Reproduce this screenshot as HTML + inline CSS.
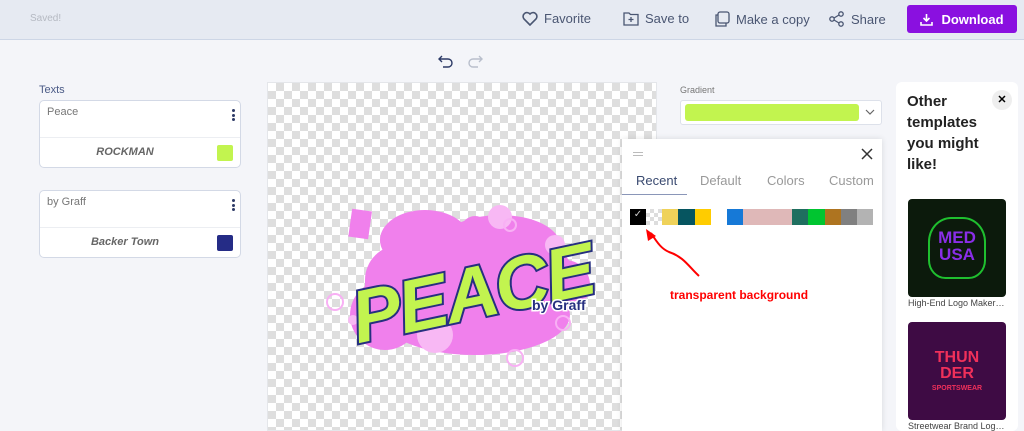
<!DOCTYPE html>
<html><head><meta charset="utf-8"><style>
*{box-sizing:border-box;margin:0;padding:0}
body{width:1024px;height:431px;overflow:hidden;background:#f4f5f9;font-family:"Liberation Sans",sans-serif;position:relative}
.top{position:absolute;left:0;top:0;width:1024px;height:40px;background:#e6eaf2;border-bottom:1px solid #cdd6e6}
.top .saved{position:absolute;left:30px;top:13px;font-size:10px;color:#b5b9c2}
.act{position:absolute;top:11px;font-size:13px;color:#4a5672;display:flex;align-items:center;gap:6px}
.dl{position:absolute;left:907px;top:5px;width:110px;height:28px;background:#8a10e0;border-radius:3px;color:#fff;font-weight:bold;font-size:13px;display:flex;align-items:center;justify-content:center;gap:8px}
.lbl{position:absolute;font-size:11px;color:#4a5a86}
.card{position:absolute;left:39px;width:202px;height:68px;background:#fff;border:1px solid #d3d9e6;border-radius:5px}
.card .t{position:absolute;left:7px;top:5px;font-size:11px;color:#777}
.card .hr{position:absolute;left:0;right:0;top:36px;border-top:1px solid #eceef2}
.card .f{position:absolute;left:0;width:170px;text-align:center;top:45px;font-size:11px;color:#666;font-style:italic;font-weight:bold}
.card .sw{position:absolute;left:177px;top:44px;width:16px;height:16px;border-radius:2px}
.dots{position:absolute;left:192px;top:8px;width:3px}
.dots i{display:block;width:3px;height:3px;background:#2c3a66;border-radius:50%;margin-bottom:1.5px}
.canvas{position:absolute;left:267px;top:82px;width:390px;height:349px;background-color:#fff;background-image:linear-gradient(45deg,#dedede 25%,transparent 25%,transparent 75%,#dedede 75%),linear-gradient(45deg,#dedede 25%,transparent 25%,transparent 75%,#dedede 75%);background-size:16px 16px;background-position:0 0,8px 8px;border:1px solid #e4e6ea}
.pop{position:absolute;left:622px;top:139px;width:260px;height:292px;background:#fff;box-shadow:0 0 6px rgba(0,0,0,.12)}
.tab{position:absolute;top:34px;font-size:13px;color:#999}
.right{position:absolute;left:896px;top:82px;width:122px;height:349px;background:#fff;border-radius:6px}
</style></head><body>
<div class="top">
<div class="saved">Saved!</div>
<div class="act" style="left:522px"><svg width="16" height="15" viewBox="0 0 16 15"><path d="M8 14L2 8A3.5 3.5 0 0 1 8 3A3.5 3.5 0 0 1 14 8Z" fill="none" stroke="#4a5672" stroke-width="1.6"/></svg>Favorite</div>
<div class="act" style="left:623px"><svg width="16" height="15" viewBox="0 0 16 15"><path d="M1 2H6L7.5 3.5H15V14H1Z" fill="none" stroke="#4a5672" stroke-width="1.3"/><path d="M8 6V11M5.5 8.5H10.5" stroke="#4a5672" stroke-width="1.3"/></svg>Save to</div>
<div class="act" style="left:714px"><svg width="16" height="16" viewBox="0 0 16 16"><rect x="4" y="1" width="11" height="11" rx="2" fill="none" stroke="#4a5672" stroke-width="1.3"/><path d="M4 4H2V15H12V12" fill="none" stroke="#4a5672" stroke-width="1.3"/></svg>Make a copy</div>
<div class="act" style="left:828px"><svg width="17" height="16" viewBox="0 0 17 16"><circle cx="13" cy="3" r="2.2" fill="none" stroke="#4a5672" stroke-width="1.3"/><circle cx="13" cy="13" r="2.2" fill="none" stroke="#4a5672" stroke-width="1.3"/><circle cx="4" cy="8" r="2.2" fill="none" stroke="#4a5672" stroke-width="1.3"/><path d="M6 7L11 4M6 9L11 12" stroke="#4a5672" stroke-width="1.3"/></svg>Share</div>
<div class="dl"><svg width="13" height="13" viewBox="0 0 13 13"><path d="M6.5 1V8M3.5 5L6.5 8L9.5 5M1 9V12H12V9" fill="none" stroke="#fff" stroke-width="1.6"/></svg>Download</div>
</div>
<svg style="position:absolute;left:438px;top:53px" width="46" height="16" viewBox="0 0 46 16"><path d="M4 3L1 6L4 9M1 6H10A4 4 0 0 1 10 14H5" fill="none" stroke="#2c3a66" stroke-width="1.4"/><path d="M41 3L44 6L41 9M44 6H35A4 4 0 0 0 35 14H40" fill="none" stroke="#b9bfcc" stroke-width="1.4"/></svg>
<div class="lbl" style="left:39px;top:84px">Texts</div>
<div class="card" style="top:100px"><div class="t">Peace</div><div class="dots"><i></i><i></i><i></i></div><div class="hr"></div><div class="f">ROCKMAN</div><div class="sw" style="background:#c2f44f"></div></div>
<div class="card" style="top:190px"><div class="t">by Graff</div><div class="dots"><i></i><i></i><i></i></div><div class="hr"></div><div class="f">Backer Town</div><div class="sw" style="background:#252c86"></div></div>
<div class="canvas"></div>
<svg style="position:absolute;left:325px;top:195px" width="290" height="190" viewBox="0 0 290 190">
<g fill="#f080ec"><rect x="25" y="15" width="20" height="28" transform="rotate(8 35 30)"/><ellipse cx="100" cy="45" rx="45" ry="30"/><circle cx="150" cy="35" r="14"/><ellipse cx="175" cy="50" rx="60" ry="30"/><rect x="40" y="50" width="210" height="80" rx="35"/><ellipse cx="150" cy="120" rx="95" ry="40"/><circle cx="60" cy="120" r="35"/><circle cx="240" cy="90" r="25"/></g>
<g fill="#f8b8f4"><circle cx="110" cy="140" r="18"/><circle cx="175" cy="22" r="12"/><circle cx="230" cy="50" r="10"/><circle cx="28" cy="125" r="5"/></g>
<g fill="none" stroke="#f8b0f4" stroke-width="2"><circle cx="185" cy="30" r="6"/><circle cx="10" cy="107" r="8"/><circle cx="190" cy="163" r="8"/><circle cx="238" cy="128" r="7"/></g>
<text x="25" y="125" font-family="Liberation Sans" font-weight="bold" font-style="italic" font-size="74" fill="#c2f44f" stroke="#262f80" stroke-width="4" paint-order="stroke" transform="rotate(-12 140 100)" letter-spacing="-2">PEACE</text>
<text x="207" y="115" font-family="Liberation Sans" font-weight="bold" font-size="14" fill="#262f80" stroke="#fff" stroke-width="3" paint-order="stroke">by Graff</text>
</svg>
<div class="lbl" style="left:680px;top:85px;font-size:9px;color:#777">Gradient</div>
<div style="position:absolute;left:680px;top:100px;width:202px;height:25px;background:#fff;border:1px solid #dde1ea;border-radius:3px"><div style="position:absolute;left:4px;top:3px;width:174px;height:17px;background:#c2f44f;border-radius:3px"></div><svg style="position:absolute;left:184px;top:8px" width="10" height="7"><path d="M1 1L5 5L9 1" fill="none" stroke="#666" stroke-width="1.2"/></svg></div>
<div class="pop">
<div style="position:absolute;left:11px;top:13px;width:10px;height:4px;border-top:1px solid #bbb;border-bottom:1px solid #bbb"></div>
<svg style="position:absolute;left:239px;top:9px" width="12" height="12"><path d="M1 1L11 11M11 1L1 11" stroke="#333" stroke-width="1.5"/></svg>
<div class="tab" style="left:14px;color:#3a4a70">Recent</div>
<div class="tab" style="left:78px">Default</div>
<div class="tab" style="left:145px">Colors</div>
<div class="tab" style="left:207px">Custom</div>
<div style="position:absolute;left:0;top:55px;width:65px;border-top:1px solid #8a96b8"></div>
<div style="position:absolute;left:0;top:55px;width:260px;border-top:1px solid #f0f0f0;z-index:-1"></div>
<div style="position:absolute;left:8px;top:70px;display:flex;height:16px">
<div style="width:16px;background:#000;color:#ccc;font-size:10px;text-align:center">✓</div>
<div style="width:16px;background-color:#fff;background-image:linear-gradient(45deg,#ddd 25%,transparent 25%,transparent 75%,#ddd 75%),linear-gradient(45deg,#ddd 25%,transparent 25%,transparent 75%,#ddd 75%);background-size:8px 8px;background-position:0 0,4px 4px"></div>
<div style="width:16px;background:#efd25a"></div><div style="width:17px;background:#065560"></div><div style="width:16px;background:#ffcc00"></div><div style="width:16px;background:#fff"></div><div style="width:16px;background:#1679d7"></div><div style="width:49px;background:#dfb8b8"></div><div style="width:16px;background:#1f6f5f"></div><div style="width:17px;background:#00c530"></div><div style="width:16px;background:#ae7420"></div><div style="width:16px;background:#808080"></div><div style="width:16px;background:#b3b3b3"></div>
</div>
<svg style="position:absolute;left:22px;top:88px" width="60" height="52"><path d="M55 49C45 40 40 30 25 25C18 22 14 17 7 6" fill="none" stroke="#f00" stroke-width="2"/><path d="M2 2L4 14L12 9Z" fill="#f00"/></svg>
<div style="position:absolute;left:48px;top:149px;font-size:12px;font-weight:bold;color:#f00">transparent background</div>
</div>
<div class="right">
<div style="position:absolute;left:11px;top:9px;font-size:15px;font-weight:bold;color:#222;line-height:21px">Other<br>templates<br>you might<br>like!</div>
<div style="position:absolute;left:96px;top:8px;width:20px;height:20px;border-radius:50%;background:#eee;font-size:11px;text-align:center;line-height:20px;font-weight:bold">✕</div>
<div style="position:absolute;left:12px;top:117px;width:98px;height:98px;background:#0c1a0c;border-radius:4px;overflow:hidden"><div style="position:absolute;left:20px;top:18px;width:58px;height:62px;border:2px solid #1fbf2f;border-radius:40% 40% 30% 30%"></div><div style="position:absolute;left:0;width:98px;top:30px;text-align:center;color:#8a2ee8;font-weight:bold;font-size:17px;line-height:17px">MED<br>USA</div></div>
<div style="position:absolute;left:12px;top:216px;font-size:9px;color:#444">High-End Logo Maker…</div>
<div style="position:absolute;left:12px;top:240px;width:98px;height:98px;background:#3e0b44;border-radius:4px;overflow:hidden"><div style="position:absolute;left:0;width:98px;top:28px;text-align:center;color:#f0305a;font-weight:bold;font-size:16px;line-height:16px">THUN<br>DER</div><div style="position:absolute;left:0;width:98px;top:63px;text-align:center;color:#f0305a;font-weight:bold;font-size:7px">SPORTSWEAR</div></div>
<div style="position:absolute;left:12px;top:339px;font-size:9px;color:#444">Streetwear Brand Log…</div>
</div>
</body></html>
